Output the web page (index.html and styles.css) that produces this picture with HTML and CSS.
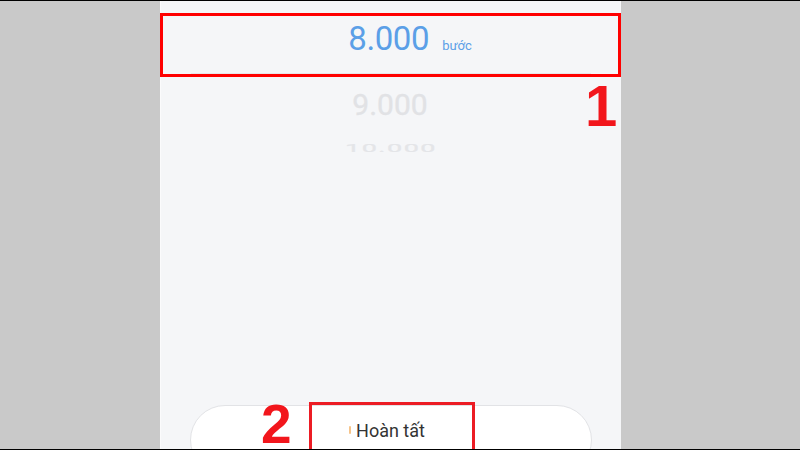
FILE: index.html
```html
<!DOCTYPE html>
<html lang="vi">
<head>
  <meta charset="UTF-8" />
  <meta name="viewport" content="width=device-width, initial-scale=1.0" />
  <title>Mục tiêu bước</title>
  <link rel="stylesheet" href="styles.css">
</head>
<body>

<div class="screen">
  <div class="phone">
    <div class="picker">
      <div class="row current">
        <span class="value">8.000</span>
        <span class="unit">bước</span>
      </div>
      <div class="row next">9.000</div>
      <div class="row far">10.000</div>
    </div>

    <div class="footer">
      <button class="done"><span class="dot"></span>Hoàn tất</button>
    </div>
  </div>

  <div class="mark box-1"></div>
  <div class="mark num-1">1</div>
  <div class="mark box-2"></div>
  <div class="mark num-2">2</div>
</div>

</body>
</html>
```

FILE: styles.css
```css
body {
  margin: 0;
  font-family: Roboto, "Noto Sans", sans-serif;
  background: #000;
}
.screen {
  position: relative;
  width: 800px;
  height: 448px;
  margin-top: 1px;
  background: #c9c9c9;
  overflow: hidden;
}
.phone {
  width: 461px;
  height: 100%;
  margin-left: 160px;
  background: #f5f6f8;
  border-left: 1px solid #fbfbfc;
  box-sizing: border-box;
  display: flex;
  flex-direction: column;
}
.picker {
  flex: 1;
  padding-top: 12px;
}
.row {
  display: flex;
  justify-content: center;
  align-items: baseline;
}
.row.current {
  height: 64px;
  align-items: center;
  position: relative;
  padding-left: 38px;
  padding-bottom: 14px;
  box-sizing: border-box;
}
.row.current::after {
  content: "";
  position: absolute;
  left: 30px;
  right: 30px;
  bottom: 3px;
  height: 1px;
  background: #e6e7ea;
}
.value {
  font-size: 33px;
  letter-spacing: -.4px;
  color: #5b9fe7;
}
.unit {
  font-size: 13px;
  color: #5b9fe7;
  margin-left: 13px;
  margin-top: 14px;
}
.next {
  font-size: 30px;
  color: #e1e2e5;
  margin-top: 10px;
  margin-right: 2px;
  -webkit-text-stroke: .3px #e1e2e5;
}
.far {
  font-size: 27px;
  color: #e4e5e8;
  transform: scaleY(.42);
  letter-spacing: 1.5px;
  margin-top: 10px;
  -webkit-text-stroke: .5px #e4e5e8;
}
.footer {
  padding: 0 29px;
}
.done {
  width: 402px;
  height: 70px;
  margin-bottom: -26px;
  border: 1px solid #e2e3e6;
  border-radius: 35px;
  background: #fff;
  font-family: Roboto, "Noto Sans", sans-serif;
  font-size: 18px;
  color: #333;
  padding: 0 8px 20px 0;
  display: flex;
  justify-content: center;
  align-items: center;
  gap: 5px;
}
.dot {
  width: 2px;
  height: 8px;
  background: #f6c48a;
  border-radius: 1px;
}
.mark {
  position: absolute;
  color: #f2161c;
  font-family: "Liberation Sans", Arial, sans-serif;
  font-weight: 700;
}
.box-1 {
  left: 160px;
  top: 12px;
  width: 455px;
  height: 58px;
  border: 3px solid #ff0000;
}
.num-1 {
  left: 585px;
  top: 76px;
  font-size: 58px;
  line-height: 1;
}
.box-2 {
  left: 309px;
  top: 401px;
  width: 160px;
  height: 50px;
  border: 3px solid #ec1c24;
}
.num-2 {
  left: 261px;
  top: 403px;
  font-size: 55px;
  line-height: 40px;
}
```
